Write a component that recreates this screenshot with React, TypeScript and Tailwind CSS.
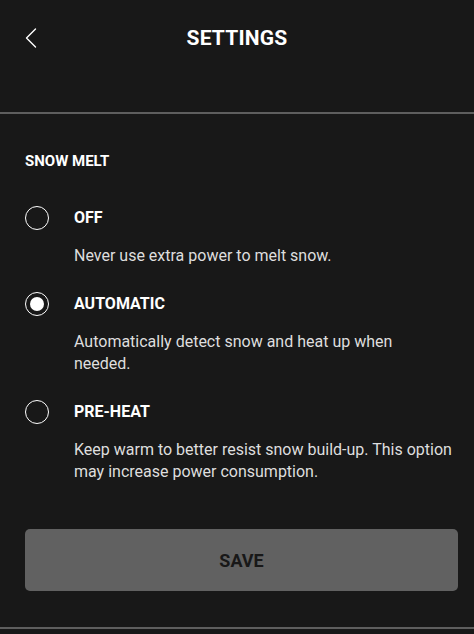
const options = [
  { id: 'off', label: 'OFF', desc: 'Never use extra power to melt snow.' },
  {
    id: 'auto',
    label: 'AUTOMATIC',
    desc: 'Automatically detect snow and heat up when\nneeded.',
  },
  {
    id: 'preheat',
    label: 'PRE-HEAT',
    desc: 'Keep warm to better resist snow build-up. This option may increase power consumption.',
  },
];

const Radio = ({ checked }: { checked: boolean }) => (
  <span className="flex h-6 w-6 shrink-0 items-center justify-center rounded-full border-[1.5px] border-white">
    {checked && <span className="h-[14px] w-[14px] rounded-full bg-white" />}
  </span>
);

export default function App() {
  const selected = 'auto';
  return (
    <div className="h-[634px] w-[474px] overflow-hidden bg-[#181818] font-['Roboto',sans-serif] text-white">
      <header className="relative flex h-[114px] justify-center border-b-2 border-[#5e5e5e] pt-[24px]">
        <svg
          className="absolute left-[25px] top-[28px]"
          width="12"
          height="20"
          viewBox="0 0 12 20"
          fill="none"
          stroke="white"
          strokeWidth="1.4"
          strokeLinecap="round"
          strokeLinejoin="round"
        >
          <polyline points="10.5,1 1.5,10 10.5,19" />
        </svg>
        <h1 className="text-[21px] font-bold leading-[28px] tracking-[0.2px]">SETTINGS</h1>
      </header>

      <section className="pl-[25px] pr-[16px] pt-[35px]">
        <h2 className="text-[15px] font-bold leading-6">SNOW MELT</h2>
        <div className="mt-[33px] flex flex-col gap-[25px]">
          {options.map((o) => (
            <div key={o.id}>
              <div className="flex items-center gap-[25px]">
                <Radio checked={o.id === selected} />
                <span className="text-[16px] font-bold leading-6">{o.label}</span>
              </div>
              <p className="mt-[15px] whitespace-pre-line pl-[49px] text-[16px] leading-[22px] text-[#dedede]">
                {o.desc}
              </p>
            </div>
          ))}
        </div>
        <button className="mt-[46px] flex h-[62px] w-full items-center justify-center rounded-[5px] bg-[#616161] text-[18px] font-bold text-[#181818]">
          SAVE
        </button>
      </section>
      <div className="mt-[36px] h-[2px] bg-[#5e5e5e]" />
    </div>
  );
}
